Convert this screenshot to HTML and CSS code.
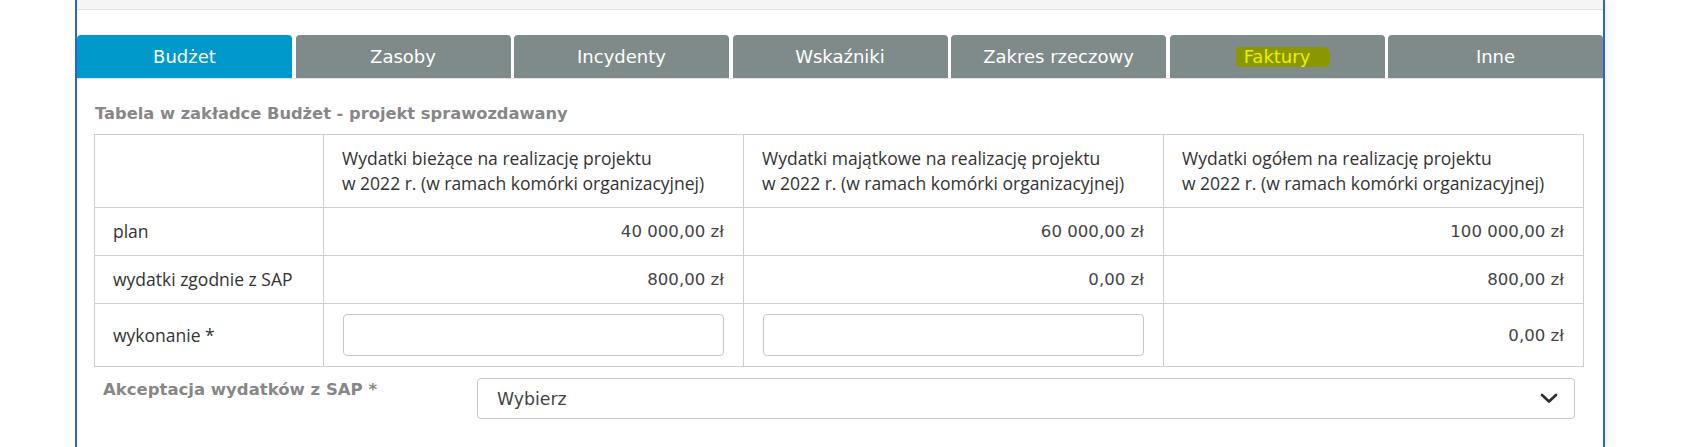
FILE: index.html
```html
<!DOCTYPE html>
<html lang="pl">
<head>
<meta charset="utf-8">
<title>Budżet</title>
<link rel="stylesheet" href="styles.css">
</head>
<body>
<div class="frame">
  <div class="topbar"></div>
  <nav class="tabs">
    <div class="tab active">Budżet</div>
    <div class="tab">Zasoby</div>
    <div class="tab">Incydenty</div>
    <div class="tab">Wskaźniki</div>
    <div class="tab">Zakres rzeczowy</div>
    <div class="tab"><span class="marked">Faktury</span></div>
    <div class="tab">Inne</div>
  </nav>
  <div class="panel">
    <h2 class="title">Tabela w zakładce Budżet - projekt sprawozdawany</h2>
    <table class="budget">
      <colgroup>
        <col class="c-label">
        <col>
        <col>
        <col>
      </colgroup>
      <thead>
        <tr>
          <th></th>
          <th>Wydatki bieżące na realizację projektu<br>w 2022 r. (w ramach komórki organizacyjnej)</th>
          <th>Wydatki majątkowe na realizację projektu<br>w 2022 r. (w ramach komórki organizacyjnej)</th>
          <th>Wydatki ogółem na realizację projektu<br>w 2022 r. (w ramach komórki organizacyjnej)</th>
        </tr>
      </thead>
      <tbody>
        <tr>
          <td>plan</td>
          <td class="num">40 000,00 zł</td>
          <td class="num">60 000,00 zł</td>
          <td class="num">100 000,00 zł</td>
        </tr>
        <tr>
          <td>wydatki zgodnie z SAP</td>
          <td class="num">800,00 zł</td>
          <td class="num">0,00 zł</td>
          <td class="num">800,00 zł</td>
        </tr>
        <tr>
          <td>wykonanie *</td>
          <td class="field"><input class="input" type="text"></td>
          <td class="field"><input class="input" type="text"></td>
          <td class="num">0,00 zł</td>
        </tr>
      </tbody>
    </table>
    <div class="form-row">
      <label class="form-label">Akceptacja wydatków z SAP *</label>
      <div class="select">
        <span class="select-text">Wybierz</span>
        <svg class="chevron" width="18" height="11" viewBox="0 0 18 11" aria-hidden="true"><polyline points="2,2 9,8.6 16,2" fill="none" stroke="#2e2e2e" stroke-width="2.7" stroke-linecap="round" stroke-linejoin="round"/></svg>
      </div>
    </div>
  </div>
</div>
</body>
</html>
```

FILE: styles.css
```css
html, body {
  margin: 0;
  padding: 0;
  background: #ffffff;
}

body {
  height: 447px;
  overflow: hidden;
  font-family: "Open Sans", "Liberation Sans", sans-serif;
  color: #333333;
}

.frame {
  margin-left: 75px;
  width: 1526px;
  height: 447px;
  border-left: 2px solid #2d63c8;
  border-right: 2px solid #2d63c8;
  box-shadow: 5px 0 9px rgba(60, 70, 120, 0.06);
}

.topbar {
  height: 9px;
  background: #f5f5f5;
  border-bottom: 1px solid #e2e2e2;
}

.tabs {
  display: flex;
  gap: 3.5px;
  margin-top: 25px;
  border-bottom: 1px solid #e4e4e4;
}

.tab {
  flex: 1 1 0;
  height: 43px;
  display: flex;
  align-items: center;
  justify-content: center;
  background: #7f8a8a;
  color: #ffffff;
  border-radius: 4px 4px 0 0;
  font-family: "DejaVu Sans", "Liberation Sans", sans-serif;
  font-size: 18px;
}

.tab.active {
  background: #0099cb;
}

.marked {
  position: relative;
  z-index: 0;
  display: inline-block;
  line-height: 20px;
  color: #ecf000;
}

.marked::before {
  content: "";
  position: absolute;
  left: -8px;
  right: -20px;
  top: 0;
  bottom: 0;
  background: #8a9700;
  border-radius: 3px 7px 5px 4px;
  z-index: -1;
}

.panel {
  padding: 0 19px 0 17px;
}

.title {
  margin: 23px 0 8px 1px;
  font-family: "DejaVu Sans", "Liberation Sans", sans-serif;
  font-weight: 700;
  font-size: 16.3px;
  line-height: 24px;
  color: #878787;
}

.budget {
  width: 100%;
  table-layout: fixed;
  border-collapse: collapse;
  font-size: 17.5px;
  line-height: 25px;
}

.c-label {
  width: 229px;
}

.budget th,
.budget td {
  border: 1px solid #cecece;
  padding: 11px 18px;
  text-align: left;
  font-weight: 400;
  color: #333333;
  vertical-align: middle;
}

.budget td.num {
  text-align: right;
  padding-right: 19px;
  font-family: "DejaVu Sans", "Liberation Sans", sans-serif;
  font-size: 16.6px;
  color: #454545;
}

.budget td.field {
  padding: 10px 19px;
}

.input {
  display: block;
  box-sizing: border-box;
  width: 100%;
  height: 42px;
  margin: 0;
  border: 1px solid #c6c6c6;
  border-radius: 4px;
  background: #ffffff;
  font: inherit;
}

.form-row {
  display: flex;
  align-items: flex-start;
  margin-top: 11px;
}

.form-label {
  box-sizing: border-box;
  width: 383px;
  padding-left: 9px;
  font-family: "DejaVu Sans", "Liberation Sans", sans-serif;
  font-weight: 700;
  font-size: 16.5px;
  line-height: 24px;
  color: #878787;
}

.select {
  flex: 1 1 auto;
  box-sizing: border-box;
  height: 41px;
  margin-right: 9px;
  display: flex;
  align-items: center;
  justify-content: space-between;
  padding: 0 16px 0 19px;
  border: 1px solid #c8c8c8;
  border-radius: 4px;
  background: #ffffff;
}

.select-text {
  font-family: "DejaVu Sans", "Liberation Sans", sans-serif;
  font-size: 17.3px;
  color: #444444;
}

.chevron {
  display: block;
}
```
